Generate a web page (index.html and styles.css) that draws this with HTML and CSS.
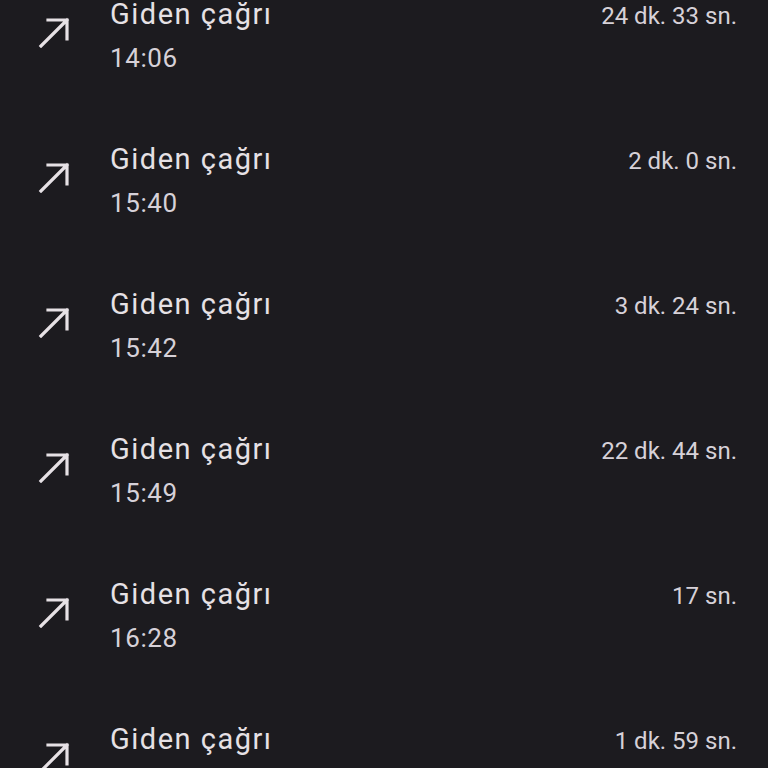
FILE: index.html
```html
<!DOCTYPE html>
<html lang="tr">
<head>
    <meta charset="UTF-8">
    <meta name="viewport" content="width=device-width, initial-scale=1.0">
    <title>Arama geçmişi</title>
    <link rel="stylesheet" href="styles.css">
</head>
<body>
    <div class="call-list">
        <div class="call-row">
            <svg class="call-icon" viewBox="0 0 32 32"><path d="M3 30 L29 4 M10 4 H29 V23" /></svg>
            <div class="call-info">
                <div class="call-top">
                    <span class="call-type">Giden çağrı</span>
                    <span class="call-duration">24 dk. 33 sn.</span>
                </div>
                <div class="call-time">14:06</div>
            </div>
        </div>
        <div class="call-row">
            <svg class="call-icon" viewBox="0 0 32 32"><path d="M3 30 L29 4 M10 4 H29 V23" /></svg>
            <div class="call-info">
                <div class="call-top">
                    <span class="call-type">Giden çağrı</span>
                    <span class="call-duration">2 dk. 0 sn.</span>
                </div>
                <div class="call-time">15:40</div>
            </div>
        </div>
        <div class="call-row">
            <svg class="call-icon" viewBox="0 0 32 32"><path d="M3 30 L29 4 M10 4 H29 V23" /></svg>
            <div class="call-info">
                <div class="call-top">
                    <span class="call-type">Giden çağrı</span>
                    <span class="call-duration">3 dk. 24 sn.</span>
                </div>
                <div class="call-time">15:42</div>
            </div>
        </div>
        <div class="call-row">
            <svg class="call-icon" viewBox="0 0 32 32"><path d="M3 30 L29 4 M10 4 H29 V23" /></svg>
            <div class="call-info">
                <div class="call-top">
                    <span class="call-type">Giden çağrı</span>
                    <span class="call-duration">22 dk. 44 sn.</span>
                </div>
                <div class="call-time">15:49</div>
            </div>
        </div>
        <div class="call-row">
            <svg class="call-icon" viewBox="0 0 32 32"><path d="M3 30 L29 4 M10 4 H29 V23" /></svg>
            <div class="call-info">
                <div class="call-top">
                    <span class="call-type">Giden çağrı</span>
                    <span class="call-duration">17 sn.</span>
                </div>
                <div class="call-time">16:28</div>
            </div>
        </div>
        <div class="call-row">
            <svg class="call-icon" viewBox="0 0 32 32"><path d="M3 30 L29 4 M10 4 H29 V23" /></svg>
            <div class="call-info">
                <div class="call-top">
                    <span class="call-type">Giden çağrı</span>
                    <span class="call-duration">1 dk. 59 sn.</span>
                </div>
                <div class="call-time">16:41</div>
            </div>
        </div>
    </div>
</body>
</html>
```

FILE: styles.css
```css
html, body {
    margin: 0;
    padding: 0;
    height: 100%;
    overflow: hidden;
}

body {
    background-color: #1c1b1f;
    color: #e6e1e5;
    font-family: Roboto, "Noto Sans", sans-serif;
}

.call-list {
    margin-top: -36px; /* list is scrolled, first row partly hidden */
}

.call-row {
    display: flex;
    align-items: flex-start;
    gap: 40px;
    padding: 30px 31px 31px 38px;
}

.call-icon {
    width: 32px;
    height: 32px;
    margin-top: 22px;
    flex-shrink: 0;
    fill: none;
    stroke: #e6e1e5;
    stroke-width: 3.2;
    stroke-linecap: square;
}

.call-info {
    flex: 1;
}

.call-top {
    display: flex;
    justify-content: space-between;
    align-items: baseline;
}

.call-type {
    font-size: 29px;
    line-height: 40px;
    letter-spacing: 1.5px;
}

.call-duration {
    font-size: 24px;
    color: #d6d1d8;
}

.call-time {
    font-size: 26px;
    line-height: 40px;
    margin-top: 4px;
    letter-spacing: 0.6px;
    color: #d6d1d8;
}
```
